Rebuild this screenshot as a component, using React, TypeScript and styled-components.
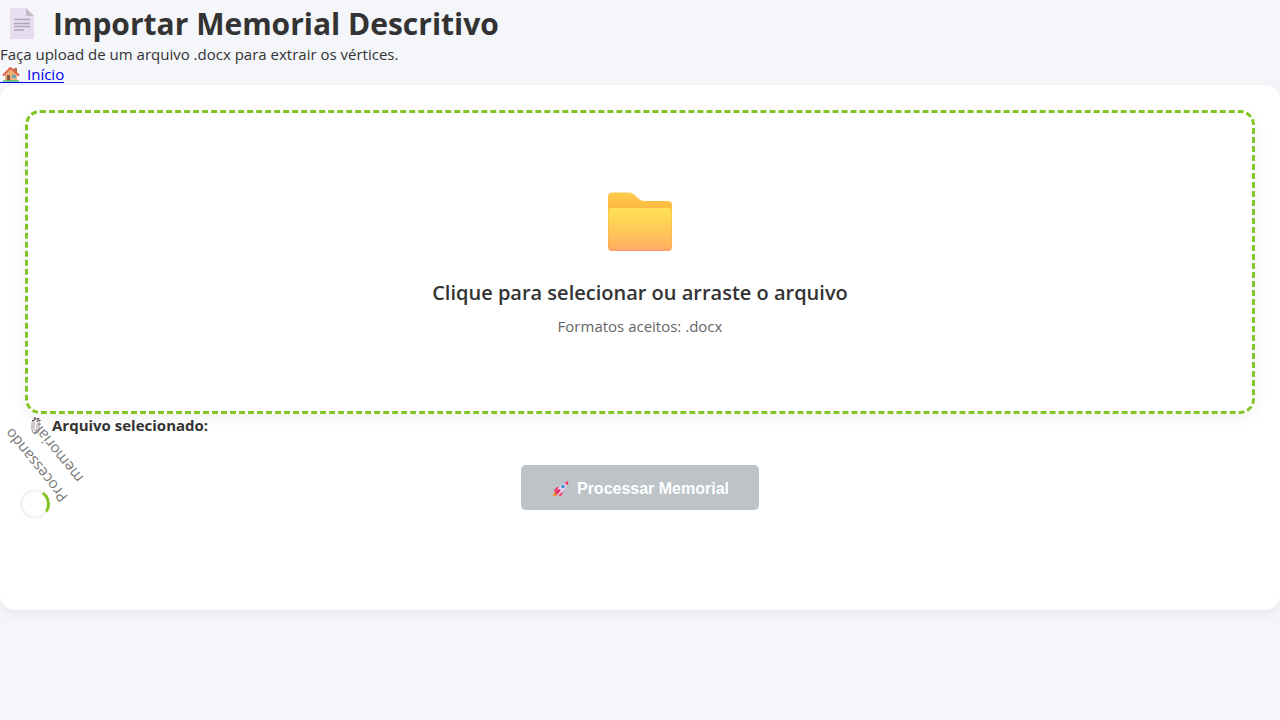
import React, { useState } from "react";
import styled, { createGlobalStyle } from "styled-components";

const GlobalStyle = createGlobalStyle`
  * {
    margin: 0;
    padding: 0;
    box-sizing: border-box;
  }

  body {
    min-height: 100vh;
    background: #f4f6fa;
    color: #333;
    font-family: "Segoe UI", "Open Sans", "Noto Sans", sans-serif;
    font-size: 15px;
    line-height: 21px;
  }
`;

const Header = styled.header`
  padding-top: 4px;
`;

const Title = styled.h1`
  display: flex;
  align-items: center;
  gap: 17px;
  padding-left: 8px;
  font-size: 30px;
  line-height: 40px;

  svg {
    width: 28px;
    height: 34px;
  }
`;

const HomeLink = styled.a`
  display: inline-flex;
  align-items: center;
  gap: 7px;
  height: 18px;
  margin-bottom: 2px;
  padding-left: 2px;
  border-bottom: 1px solid #0000ee;
  color: #0000ee;
  line-height: 18px;
  text-decoration: none;
  vertical-align: top;

  svg {
    width: 18px;
    height: 16px;
  }
`;

const HomeNav = styled.nav`
  height: 20px;
`;

const Card = styled.main`
  position: relative;
  padding: 25px 25px 100px;
  border-radius: 15px;
  background: #fff;
  box-shadow: 0 4px 15px rgba(0, 0, 0, 0.06);
`;

const DropZone = styled.label`
  display: flex;
  flex-direction: column;
  align-items: center;
  padding: 76px 20px 74px;
  border: 3px dashed #82c424;
  border-radius: 15px;
  background: #fff;
  box-shadow: 0 4px 15px rgba(0, 0, 0, 0.06);
  text-align: center;
  cursor: pointer;
`;

const FileInput = styled.input`
  position: absolute;
  width: 1px;
  height: 1px;
  opacity: 0;
`;

const FolderIcon = styled.svg`
  width: 66px;
  height: 66px;
  margin-bottom: 24px;
`;

const DropTitle = styled.h3`
  margin-bottom: 9px;
  font-size: 20px;
  font-weight: 600;
  line-height: 28px;
`;

const DropHint = styled.p`
  color: #666;
`;

const FileInfo = styled.p`
  display: flex;
  align-items: center;
  gap: 10px;
  padding: 1px 0 0 5px;
  font-weight: 700;

  svg {
    width: 12px;
    height: 18px;
  }
`;

const Actions = styled.div`
  display: flex;
  justify-content: center;
  padding-top: 29px;
`;

const ProcessButton = styled.button`
  display: flex;
  align-items: center;
  gap: 6px;
  height: 45px;
  padding: 2px 30px 0;
  border: none;
  border-radius: 5px;
  background: #bdc3c7;
  color: #fff;
  font-family: "Liberation Sans", Arial, sans-serif;
  font-size: 16px;
  font-weight: 700;

  svg {
    width: 20px;
    height: 18px;
  }
`;

const Loading = styled.div`
  position: absolute;
  left: 20px;
  bottom: 91px;
  width: 30px;
  height: 30px;
`;

const Spinner = styled.div`
  width: 30px;
  height: 30px;
  border: 3px solid #f3f3f3;
  border-top-color: #82c424;
  border-radius: 50%;
  transform: rotate(80deg);
`;

const LoadingText = styled.p`
  position: absolute;
  left: -25px;
  bottom: 37px;
  width: 100px;
  color: #777;
  line-height: 24px;
  text-align: center;
  transform: rotate(231deg);
`;

function PageIcon() {
  return (
    <svg viewBox="0 0 28 34" aria-hidden="true">
      <defs>
        <linearGradient id="page" x1="0" y1="0" x2="1" y2="1">
          <stop offset="0" stopColor="#e8e2f2" />
          <stop offset="1" stopColor="#e6d9f0" />
        </linearGradient>
      </defs>
      <path d="M3 1h15l8 8v22q0 1-1 1H3q-1 0-1-1V2q0-1 1-1z" fill="url(#page)" />
      <path d="M18 1l8 8h-7q-1 0-1-1z" fill="#c4bbcc" />
      <path d="M6 12.500h16M6 16.500h16M6 19.500h16M6 23h10" stroke="#b1a7b8" strokeWidth="1.500" />
    </svg>
  );
}

function HouseIcon() {
  return (
    <svg viewBox="0 0 18 16" aria-hidden="true">
      <path d="M3 7l6-5 6 5v8H3z" fill="#e7b27c" />
      <path d="M12 2h3v5l-3-2z" fill="#b66b4e" />
      <path d="M1.500 9L8.500 2 16.500 9" fill="none" stroke="#e2604a" strokeWidth="2" strokeLinejoin="round" strokeLinecap="round" />
      <path d="M5 9h3v6H5z" fill="#8c5543" />
      <path d="M10.500 9h3v3h-3z" fill="#4b9bd0" />
      <path d="M1 15h16" stroke="#4cc36b" strokeWidth="1.500" />
    </svg>
  );
}

function Folder() {
  return (
    <FolderIcon viewBox="0 0 66 66" aria-hidden="true">
      <defs>
        <linearGradient id="folderBack" x1="0" y1="0" x2="0" y2="1">
          <stop offset="0" stopColor="#ffcc4d" />
          <stop offset="0.35" stopColor="#fbb43e" />
          <stop offset="1" stopColor="#fba94c" />
        </linearGradient>
        <linearGradient id="folderFront" x1="0" y1="0" x2="0" y2="1">
          <stop offset="0" stopColor="#ffe052" />
          <stop offset="0.55" stopColor="#ffc85a" />
          <stop offset="0.93" stopColor="#ffb05f" />
          <stop offset="1" stopColor="#ff9a76" />
        </linearGradient>
      </defs>
      <path d="M5 3.500h17q3 0 5 2l5 4.500q2 2 5 2H61q4 0 4 4v42q0 4-4 4H5q-4 0-4-4V7.500q0-4 4-4z" fill="url(#folderBack)" />
      <path d="M5 19h56q3.500 0 3.500 3v36q0 4-4 4H5.500q-4 0-4-4V22q0-3 3.500-3z" fill="url(#folderFront)" />
    </FolderIcon>
  );
}

function ClipIcon() {
  return (
    <svg viewBox="0 0 12 18" fill="none" aria-hidden="true">
      <path d="M2 5.500v7.500q0 3.500 3.500 3.500T9 13V4.500Q9 2 6.500 2T4 4.500V12q0 1.500 1.500 1.500T7 12V6" stroke="#9a959d" strokeWidth="1" />
      <path d="M2.500 4.500Q3 2 6 1.500T10 4" stroke="#4a454d" strokeWidth="1.500" strokeDasharray="2 1" />
    </svg>
  );
}

function RocketIcon() {
  return (
    <svg viewBox="0 0 20 18" aria-hidden="true">
      <path d="M1.500 16.500l1.500-4.500 4 3.500z" fill="#ff9a2e" />
      <path d="M2.500 10.500L6 7l4 .500-4 5zM7 13l4-3 1 3-3 4z" fill="#f43a6b" />
      <path d="M5 12.500Q7 5 16.500 2 16 9.500 8 14.500z" fill="#e2d3ec" />
      <path d="M14 2.500l3.500-1.500-1 4q-2 0-2.500-2.500z" fill="#f4315f" />
      <circle cx="12" cy="6.500" r="1.800" fill="#3f8fd6" />
      <path d="M5.500 13l2.500-2.500" stroke="#e72c62" strokeWidth="3" strokeLinecap="round" />
    </svg>
  );
}

export default function App() {
  const [fileName, setFileName] = useState("");

  return (
    <>
      <GlobalStyle />
      <Header>
        <Title>
          <PageIcon />
          Importar Memorial Descritivo
        </Title>
        <p>Faça upload de um arquivo .docx para extrair os vértices.</p>
        <HomeNav>
          <HomeLink href="#inicio">
            <HouseIcon />
            Início
          </HomeLink>
        </HomeNav>
      </Header>
      <Card>
        <DropZone htmlFor="memorial">
          <Folder />
          <DropTitle>Clique para selecionar ou arraste o arquivo</DropTitle>
          <DropHint>Formatos aceitos: .docx</DropHint>
          <FileInput
            id="memorial"
            type="file"
            accept=".docx"
            onChange={(event) => setFileName(event.target.files?.[0]?.name ?? "")}
          />
        </DropZone>
        <FileInfo>
          <ClipIcon />
          Arquivo selecionado: {fileName}
        </FileInfo>
        <Actions>
          <ProcessButton type="button" disabled={!fileName}>
            <RocketIcon />
            Processar Memorial
          </ProcessButton>
        </Actions>
        <Loading role="status">
          <LoadingText>Processando memorial...</LoadingText>
          <Spinner />
        </Loading>
      </Card>
    </>
  );
}
